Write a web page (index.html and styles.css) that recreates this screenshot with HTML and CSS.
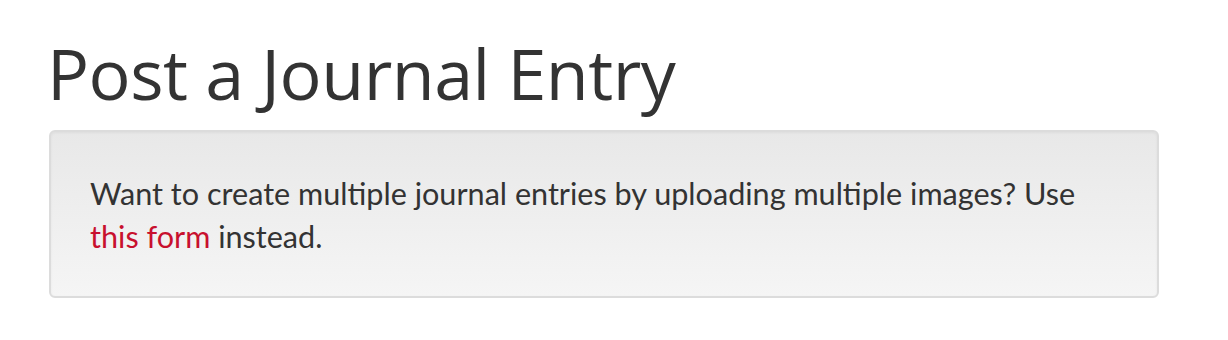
FILE: index.html
```html
<!doctype html>
<html lang="en">
<head>
    <meta charset="UTF-8">
    <title>Post a Journal Entry</title>
    <link rel="stylesheet" href="styles.css">
</head>
    <body>
        <section class="pageContent">
            <h1 class="pageTitle">Post a Journal Entry</h1>
            <div class="noticeWell">
                <p>Want to create multiple journal entries by uploading multiple images? Use <a href="#" class="noticeLink">this form</a> instead.</p>
            </div>
        </section>
    </body>
</html>
```

FILE: styles.css
```css
body {
    margin: 0;
    background-color: #ffffff;
    color: #333333;
    font-family: "Open Sans", Arial, sans-serif;
}

.pageContent {
    width: 1110px;
    padding: 0 0 0 49px;
}

.pageTitle {
    font-size: 70px;
    font-weight: 400;
    line-height: 1.1;
    margin: 35px 0 18px -2px;
    letter-spacing: -0.5px;
}

.noticeWell {
    background-image: linear-gradient(to bottom, #e8e8e8 0%, #f5f5f5 100%);
    border: 2px solid #dcdcdc;
    border-radius: 6px;
    box-shadow: inset 0 1px 3px rgba(0, 0, 0, 0.05);
    padding: 40px 40px 38px 39px;
}

.noticeWell p {
    margin: 0;
    font-family: Lato, "Noto Sans", sans-serif;
    font-size: 30.6px;
    line-height: 43px;
}

.noticeLink {
    color: #c8102e;
    text-decoration: none;
}
```
